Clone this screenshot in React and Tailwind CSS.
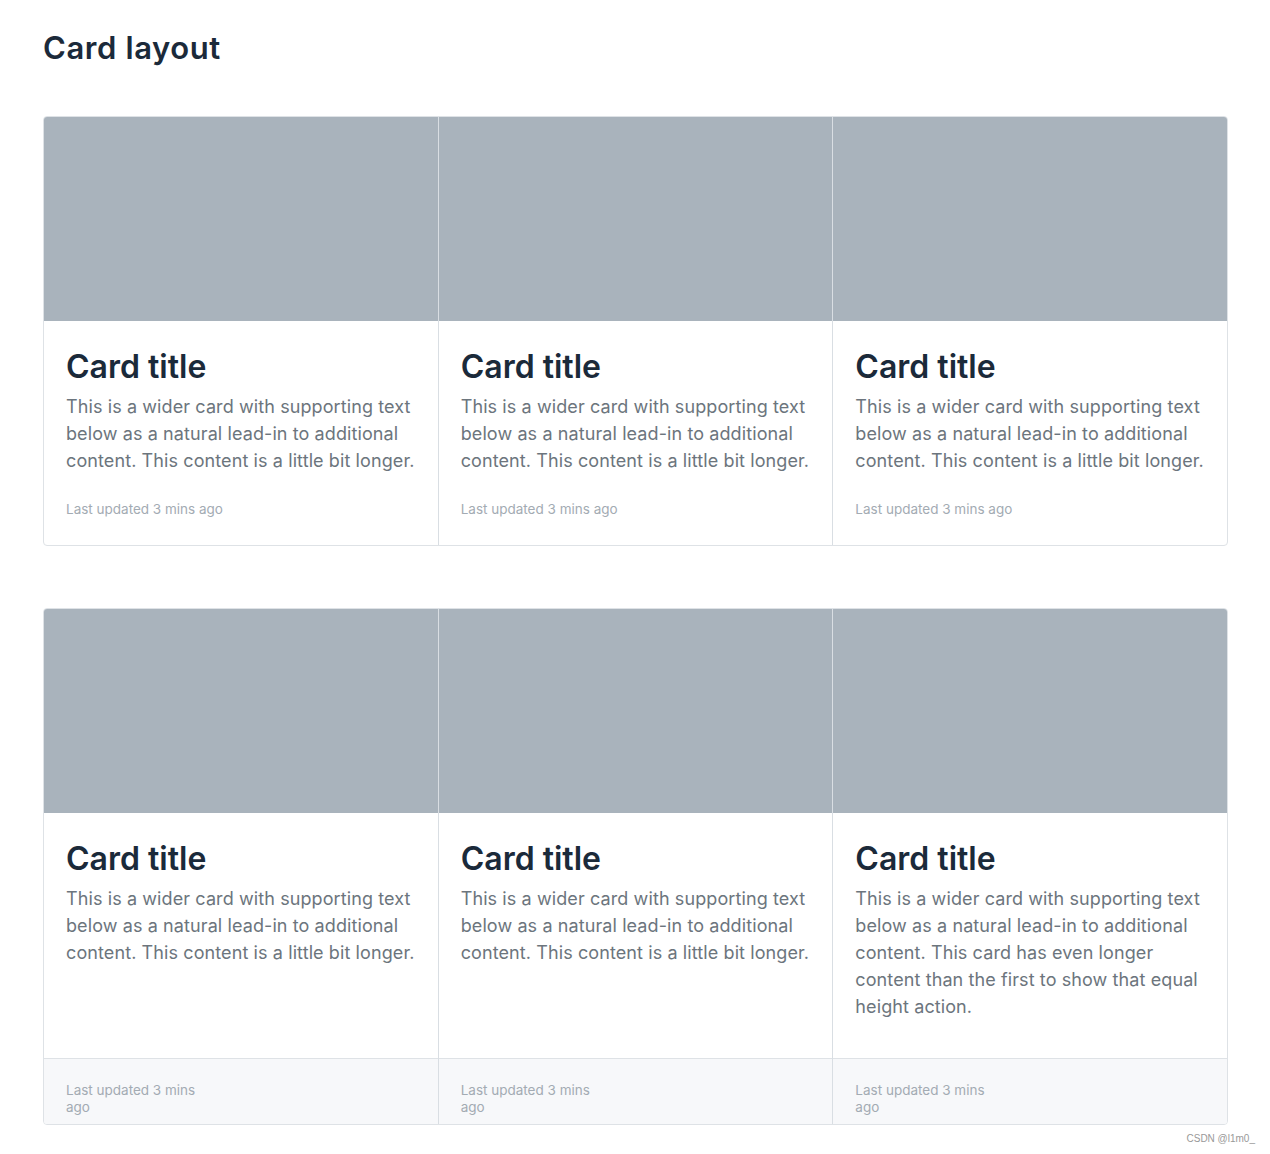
import React from 'react';

const text = 'This is a wider card with supporting text below as a natural lead-in to additional content. This content is a little bit longer.';
const longText = 'This is a wider card with supporting text below as a natural lead-in to additional content. This card has even longer content than the first to show that equal height action.';

const CardTop = ({ children, first }) => (
    <div className={`flex-1 flex flex-col ${first ? '' : 'border-l border-[#d9dee3]'}`}>
        <div className="h-[204px] bg-[#a9b3bc]" />
        {children}
    </div>
);

const App = () => {
    return (
        <div className="min-h-[1154px] bg-white px-[43px] pt-[30px] pb-[30px] font-['Inter',sans-serif] relative">
            <h1 className="text-[31px] leading-[36px] font-semibold text-[#1b2a3a] tracking-[0.6px]">Card layout</h1>

            {/* Row 1 */}
            <div className="mt-[50px] w-[1185px] flex border border-[#dee2e6] rounded-[4px] overflow-hidden">
                {[0, 1, 2].map(i => (
                    <CardTop key={i} first={i === 0}>
                        <div className="px-[22px] pt-[27px] pb-[27px]">
                            <h5 className="text-[32px] leading-[38px] font-semibold text-[#1b2a3a]">Card title</h5>
                            <p className="mt-[7px] text-[18px] leading-[27px] tracking-[0.1px] text-[#6c757d]">{text}</p>
                            <p className="mt-[27px] text-[13.5px] leading-[17px] text-[#a3abb3]">Last updated 3 mins ago</p>
                        </div>
                    </CardTop>
                ))}
            </div>

            {/* Row 2 */}
            <div className="mt-[62px] w-[1185px] flex border border-[#dee2e6] rounded-[4px] overflow-hidden">
                {[0, 1, 2].map(i => (
                    <CardTop key={i} first={i === 0}>
                        <div className="flex-1 px-[22px] pt-[27px] pb-[38px]">
                            <h5 className="text-[32px] leading-[38px] font-semibold text-[#1b2a3a]">Card title</h5>
                            <p className="mt-[7px] text-[18px] leading-[27px] tracking-[0.1px] text-[#6c757d]">{i === 2 ? longText : text}</p>
                        </div>
                        <div className="border-t border-[#dee2e6] bg-[#f7f8fa] px-[22px] pt-[23px] pb-[8px]">
                            <p className="max-w-[140px] text-[13.5px] leading-[17px] text-[#a3abb3]">Last updated 3 mins ago</p>
                        </div>
                    </CardTop>
                ))}
            </div>

            <div className="absolute right-[15px] bottom-[9px] text-[10px] text-[#999] font-['Liberation_Sans',sans-serif]">CSDN @l1m0_</div>
        </div>
    );
};

export default App;
